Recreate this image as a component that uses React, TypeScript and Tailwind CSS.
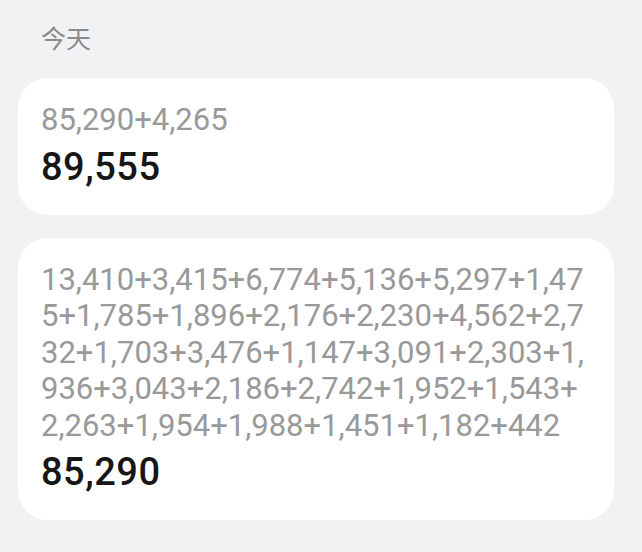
const items = [
  {
    id: "today",
    expr: "85,290+4,265",
    total: "89,555",
  },
  {
    id: "history",
    expr:
      "13,410+3,415+6,774+5,136+5,297+1,475+1,785+1,896+2,176+2,230+4,562+2,732+1,703+3,476+1,147+3,091+2,303+1,936+3,043+2,186+2,742+1,952+1,543+2,263+1,954+1,988+1,451+1,182+442",
    total: "85,290",
  },
]

export default function App() {
  return (
    <div className="w-[642px] h-[552px] bg-[#f1f2f4] pl-[18px] pr-[28px] pt-[24px] font-['Roboto','Noto_Sans_CJK_SC',sans-serif]">
      <p className="px-[23px] text-[25px] leading-[32px] text-[#8a8a8a]">今天</p>

      <div className="mt-[22px] flex flex-col gap-[23px]">
        {items.map((item) => (
          <div
            key={item.id}
            className="rounded-[30px] bg-white px-[23px] pt-[24px] pb-[26px]"
          >
            <p className="break-all text-[31px] leading-[36.5px] text-[#999999]">
              {item.expr}
            </p>
            <p className="mt-[6px] text-[38px] leading-[44px] font-medium tracking-[0.5px] text-[#161616]">
              {item.total}
            </p>
          </div>
        ))}
      </div>
    </div>
  )
}
